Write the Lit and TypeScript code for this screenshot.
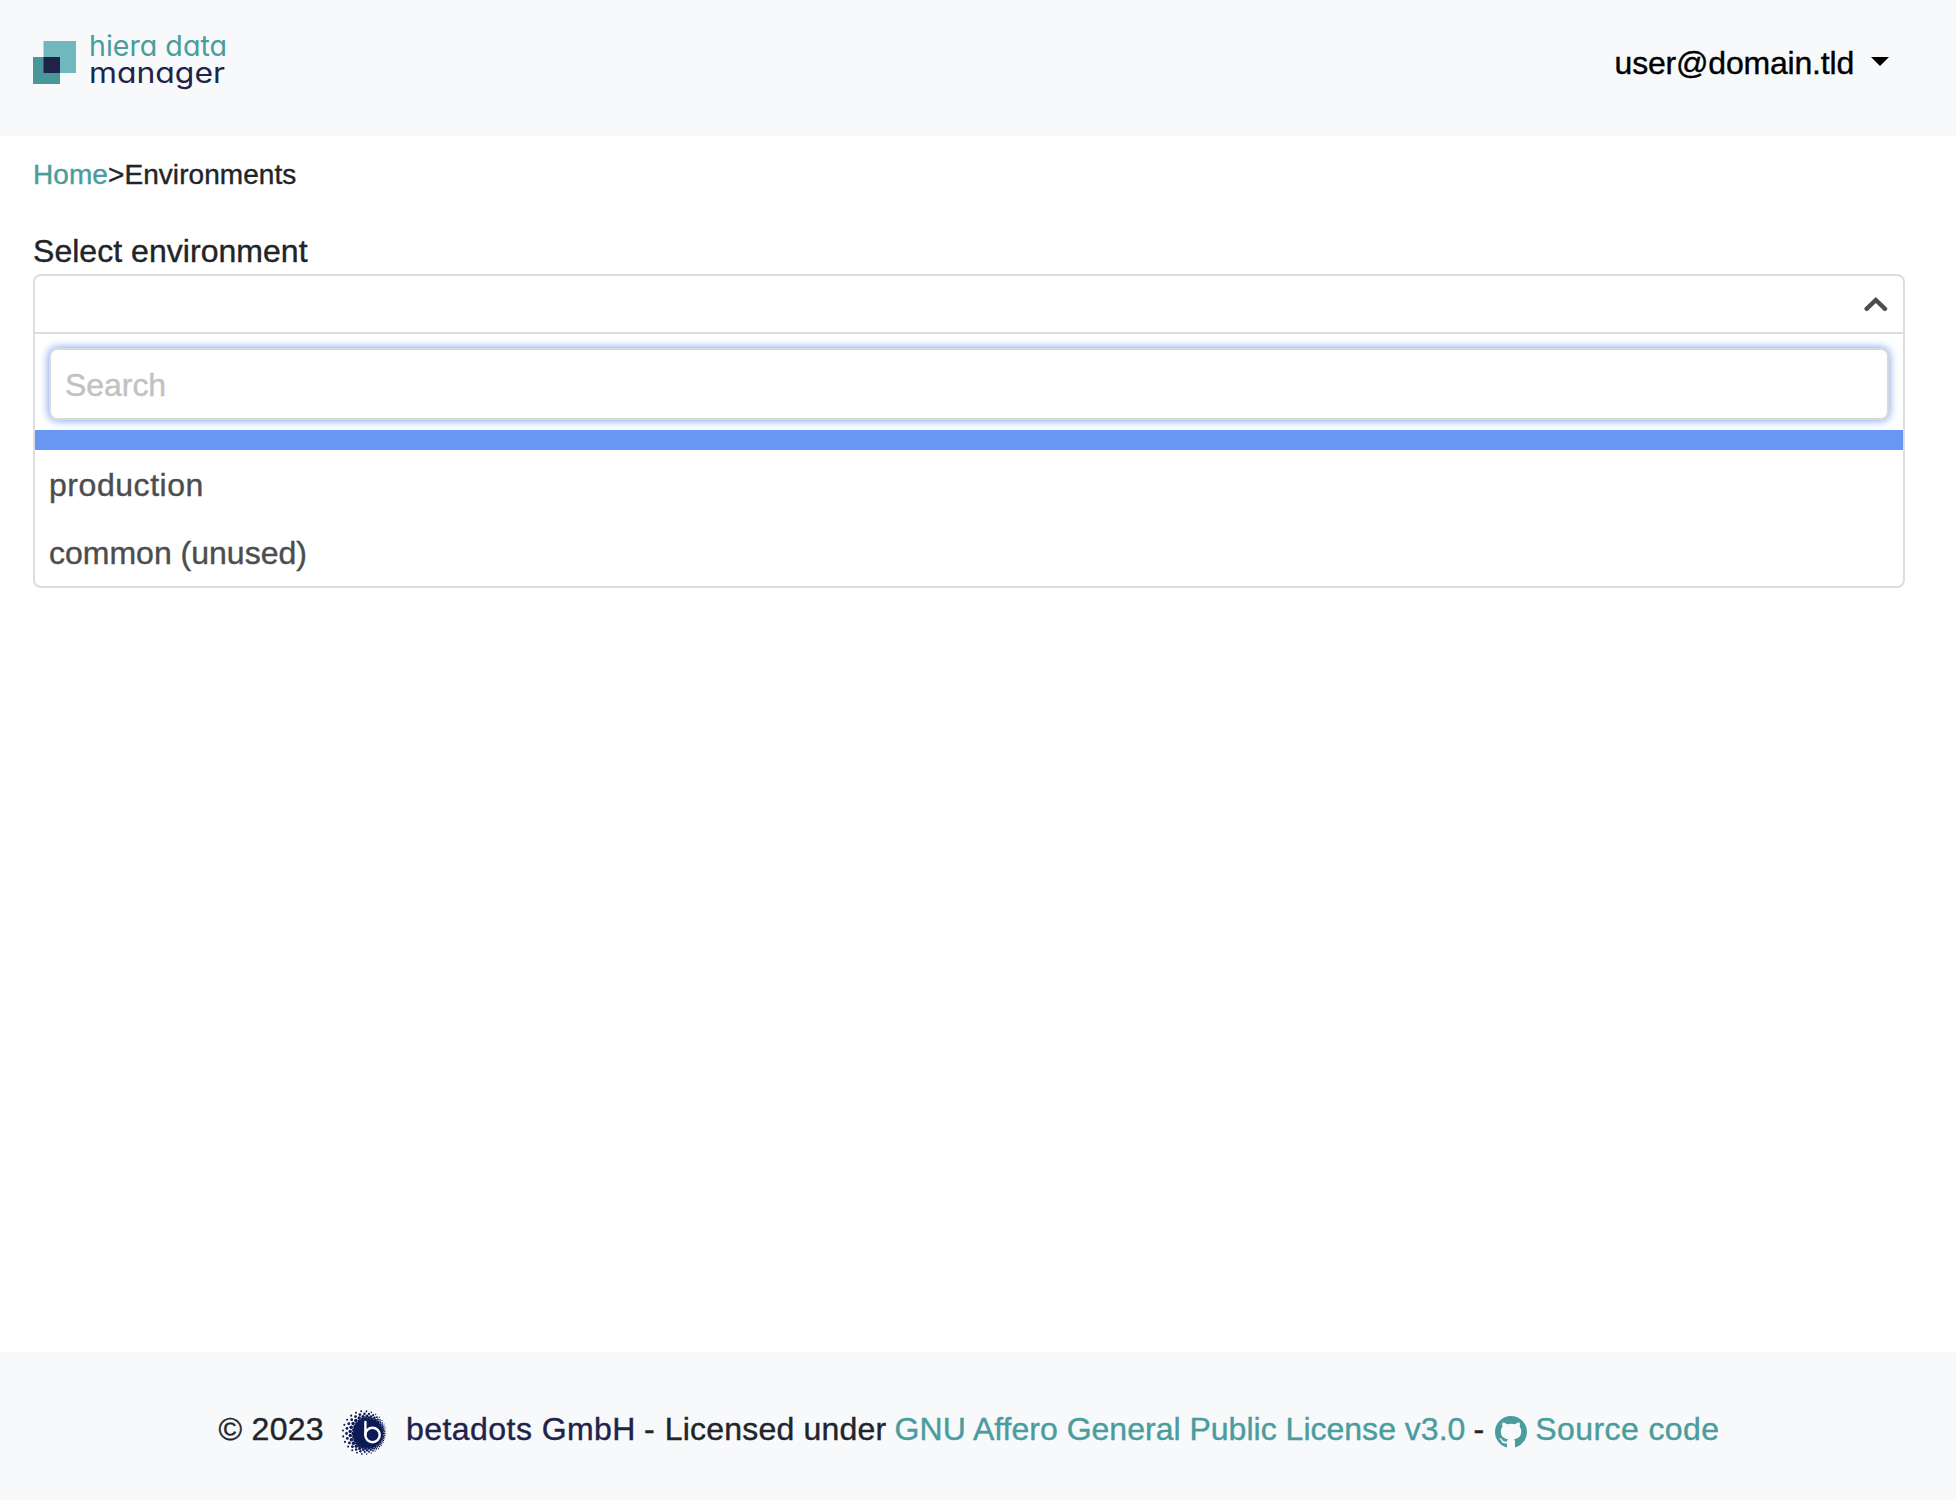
import { LitElement, html, css, svg } from "lit";
import { customElement, property, state } from "lit/decorators.js";

/* Halftone ring around the solid core: dots shrink towards the outer circle. */
function halftone() {
  const cx = 28;
  const cy = 23.5;
  const core = 14.5;
  const ox = 23;
  const oy = 22.5;
  const outer = 22;
  const dots: { x: number; y: number; r: number }[] = [];
  const rays = 28;
  for (let k = 0; k < rays; k++) {
    for (let ring = 0; ring < 4; ring++) {
      const a = ((k + (ring % 2) * 0.5) / rays) * Math.PI * 2;
      const dx = Math.cos(a);
      const dy = Math.sin(a);
      const px = cx - ox;
      const py = cy - oy;
      const b = px * dx + py * dy;
      const edge = -b + Math.sqrt(b * b - (px * px + py * py) + outer * outer);
      const span = edge - core;
      const d = core + span * (0.06 + ring * 0.29);
      const size = Math.min(2.1, 0.6 + span * 0.145);
      dots.push({ x: cx + dx * d, y: cy + dy * d, r: size * (1 - ring * 0.17) });
    }
  }
  return dots;
}

@customElement("app-logo")
export class AppLogo extends LitElement {
  static styles = css`
    :host { display: block; width: 200px; height: 64px; }
    .logo { display: block; overflow: visible; }
    .word {
      font-family: Inter, "Open Sans", sans-serif;
      font-size: 28.5px;
      font-weight: 400;
      font-feature-settings: "cv11" 1;
    }
    .teal { fill: #4a9c9d; }
    .navy { fill: #1f2349; }
  `;
  render() {
    return html`<svg class="logo" width="200" height="64" viewBox="0 0 200 64">
      <rect x="10.5" y="9" width="32.5" height="32" fill="#6fb8be"></rect>
      <rect x="0" y="25" width="27" height="27" fill="#4a9799"></rect>
      <rect class="navy" x="10.5" y="25" width="16.5" height="16"></rect>
      <text class="word teal" x="56" y="24.3" textLength="138" lengthAdjust="spacingAndGlyphs">hiera data</text>
      <text class="word navy" x="56" y="51.3" textLength="136" lengthAdjust="spacingAndGlyphs">manager</text>
    </svg>`;
  }
}

@customElement("env-select")
export class EnvSelect extends LitElement {
  @property({ type: Array }) options: string[] = [];
  @state() private query = "";

  static styles = css`
    :host { display: block; }
    .box {
      box-sizing: border-box;
      border: 2px solid #dcdce1;
      border-radius: 8px;
      height: 314px;
      overflow: hidden;
      color: #4d4d4d;
    }
    .current {
      display: flex;
      align-items: center;
      justify-content: flex-end;
      height: 56px;
      padding-right: 15px;
      border-bottom: 2px solid #dcdce1;
    }
    .search { padding: 14px 14px 10px; }
    .input {
      display: block;
      box-sizing: border-box;
      width: 100%;
      height: 72px;
      padding: 2px 14px 0;
      border: 2px solid #d9dade;
      border-radius: 8px;
      outline: none;
      background: #fff;
      font: inherit;
      letter-spacing: -0.05px;
      color: #4d4d4d;
      box-shadow: 0 0 10px #6897f3;
    }
    .input::placeholder { color: #c2c2c2; opacity: 1; -webkit-text-stroke: 0.4px #c2c2c2; }
    .blank { height: 20px; background: #6897f3; }
    .option {
      display: flex;
      align-items: center;
      height: 68px;
      padding: 1px 14px 0;
      box-sizing: border-box;
      letter-spacing: 0;
    }
    .option.wide { letter-spacing: 0.55px; }
  `;
  render() {
    return html`<div class="box">
      <div class="current">
        <svg width="24" height="16" viewBox="0 0 24 16">
          <path d="M2.6 12.8 11.8 4 21 12.8" fill="none" stroke="#4d4d4d" stroke-width="4.4" stroke-linecap="round"></path>
        </svg>
      </div>
      <div class="search">
        <input class="input" type="text" placeholder="Search" .value=${this.query}
          @input=${(e: Event) => (this.query = (e.target as HTMLInputElement).value)} />
      </div>
      <div class="blank"></div>
      ${this.options
        .filter((o) => o.includes(this.query))
        .map((o) => html`<div class="option ${o.length < 12 ? "wide" : ""}">${o}</div>`)}
    </div>`;
  }
}

@customElement("app-root")
export class AppRoot extends LitElement {
  static styles = css`
    :host {
      display: flex;
      flex-direction: column;
      height: 1500px;
      background: #fff;
      color: #212529;
      font-family: "Liberation Sans", Arial, sans-serif;
      font-size: 32px;
      line-height: 48px;
      -webkit-text-stroke: 0.4px currentColor;
    }
    app-logo { -webkit-text-stroke: 0; }
    .header {
      box-sizing: border-box;
      display: flex;
      justify-content: space-between;
      align-items: flex-start;
      height: 136px;
      padding: 32px 67px 0 33px;
      background: #f8f9fb;
    }
    .user {
      display: flex;
      align-items: center;
      gap: 17px;
      margin-top: 7px;
      color: #000;
      letter-spacing: -0.2px;
    }
    .caret {
      border: 9px solid transparent;
      border-top-color: #000;
      border-bottom: 0;
      margin-top: -3px;
    }
    .main { flex: 1; padding: 18px 51px 0 33px; }
    .crumbs { display: flex; font-size: 28px; line-height: 42px; margin-bottom: 33px; letter-spacing: 0.07px; }
    .label { line-height: 45px; letter-spacing: 0.04px; }
    .link { color: #4a9c9d; text-decoration: none; }
    .footer {
      box-sizing: border-box;
      display: flex;
      height: 148px;
      padding: 53px 0 0 218.5px;
      background: #f8f9fb;
      white-space: nowrap;
    }
    .copy { letter-spacing: 0.3px; }
    .dots { margin: 5px 0 0 17px; flex: none; }
    .company { margin-left: 19px; color: #1f2349; letter-spacing: 0.45px; }
    .dash { margin-left: 8px; }
    .licensed { margin-left: 10.2px; letter-spacing: 0.2px; }
    .license { margin-left: 8.2px; letter-spacing: 0.01px; }
    .source { display: flex; gap: 8.7px; margin-left: 10.6px; letter-spacing: 0.4px; }
    .github { flex: none; margin-top: 11px; }
  `;
  render() {
    return html`
      <header class="header">
        <app-logo></app-logo>
        <div class="user"><span>user@domain.tld</span><span class="caret"></span></div>
      </header>
      <main class="main">
        <nav class="crumbs"><a class="link">Home</a><span>&gt;</span><span>Environments</span></nav>
        <div class="label">Select environment</div>
        <env-select .options=${["production", "common (unused)"]}></env-select>
      </main>
      <footer class="footer">
        <span class="copy">© 2023</span>
        <svg class="dots" width="46" height="46" viewBox="0 0 46 46">
          <g fill="#0d1b54">
            <circle cx="28" cy="23.5" r="14.5"></circle>
            ${halftone().map((d) => svg`<circle cx=${d.x.toFixed(2)} cy=${d.y.toFixed(2)} r=${d.r.toFixed(2)}></circle>`)}
          </g>
          <g fill="none" stroke="#fff" stroke-width="2.4" stroke-linecap="round">
            <circle cx="31.5" cy="25" r="7.2"></circle>
            <line x1="24.4" y1="12" x2="24.4" y2="25"></line>
          </g>
        </svg>
        <a class="company">betadots GmbH</a>
        <span class="dash">-</span>
        <span class="licensed">Licensed under</span>
        <a class="link license">GNU Affero General Public License v3.0</a>
        <span class="dash">-</span>
        <a class="link source">
          <svg class="github" width="32" height="32" viewBox="0 0 16 16" fill="currentColor">
            <path d="M8 0C3.58 0 0 3.58 0 8c0 3.54 2.29 6.53 5.47 7.59.4.07.55-.17.55-.38 0-.19-.01-.82-.01-1.49-2.01.37-2.53-.49-2.69-.94-.09-.23-.48-.94-.82-1.13-.28-.15-.68-.52-.01-.53.63-.01 1.08.58 1.23.82.72 1.21 1.87.87 2.33.66.07-.52.28-.87.51-1.07-1.78-.2-3.64-.89-3.64-3.95 0-.87.31-1.59.82-2.15-.08-.2-.36-1.02.08-2.12 0 0 .67-.21 2.2.82.64-.18 1.32-.27 2-.27s1.36.09 2 .27c1.53-1.04 2.2-.82 2.2-.82.44 1.1.16 1.92.08 2.12.51.56.82 1.27.82 2.15 0 3.07-1.87 3.75-3.65 3.95.29.25.54.73.54 1.48 0 1.07-.01 1.93-.01 2.2 0 .21.15.46.55.38A8.01 8.01 0 0 0 16 8c0-4.42-3.58-8-8-8z"></path>
          </svg>
          <span>Source code</span>
        </a>
      </footer>
    `;
  }
}
